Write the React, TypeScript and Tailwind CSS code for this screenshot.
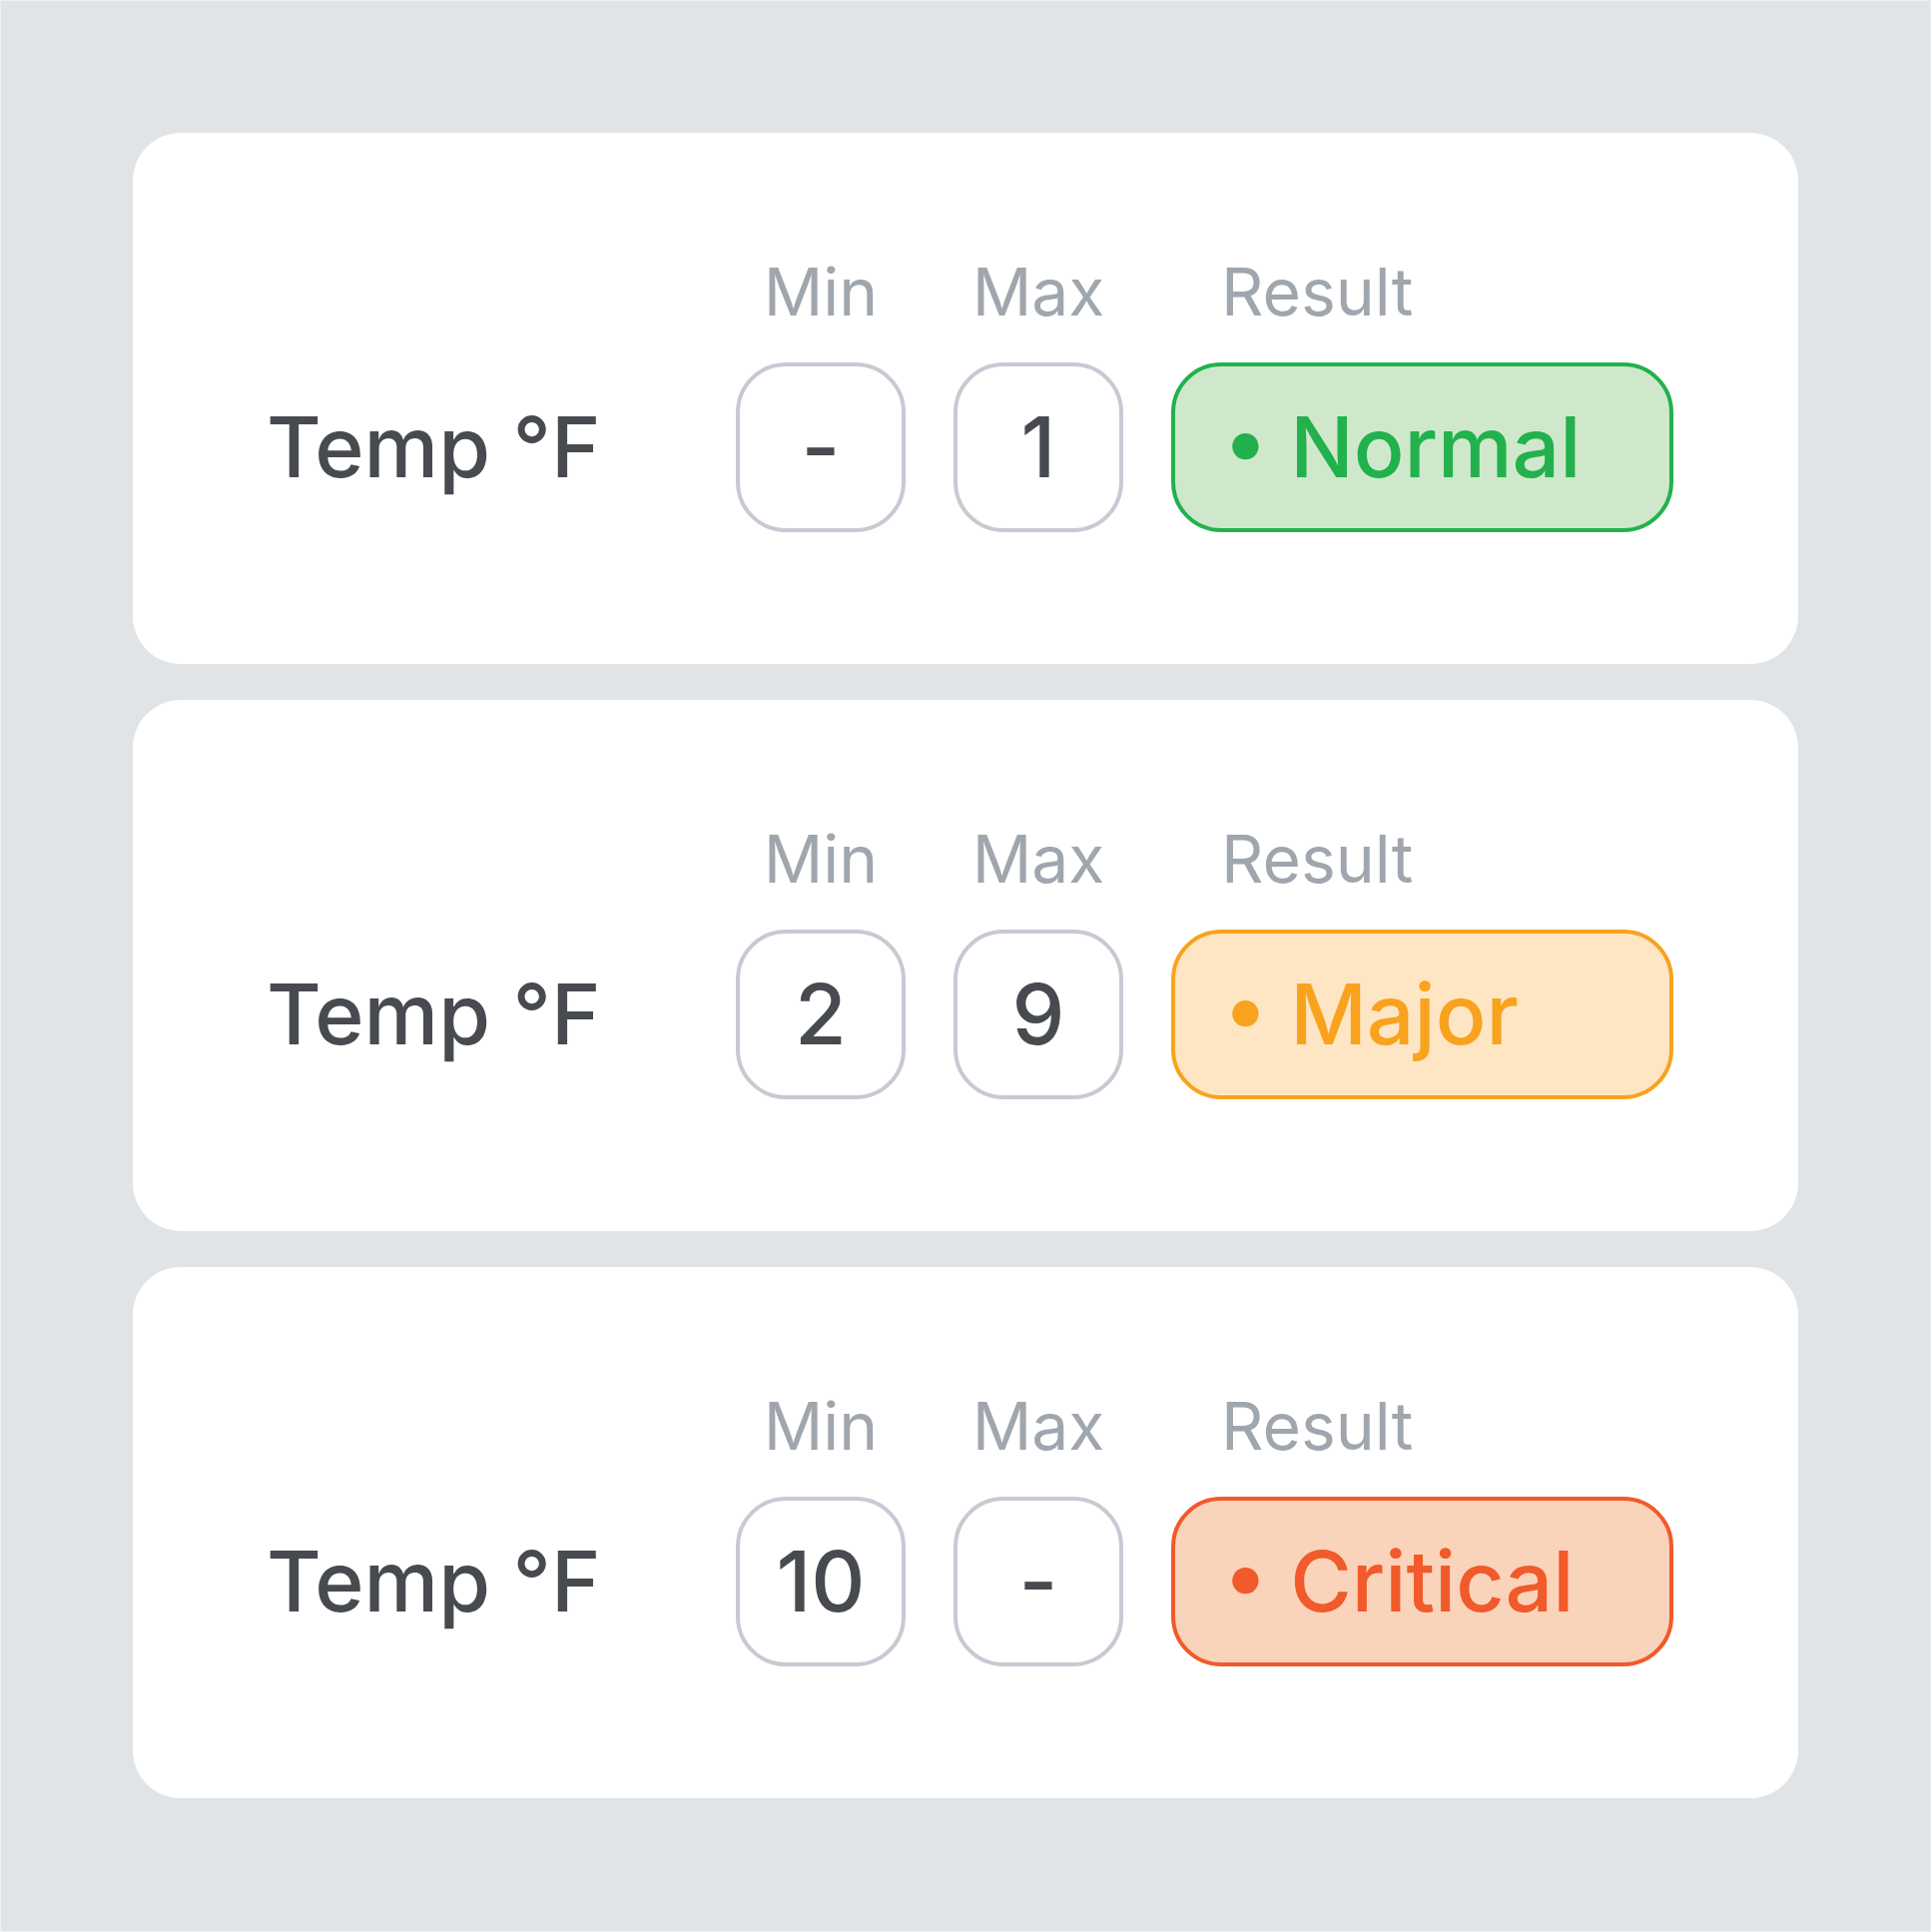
const rows = [
  {
    min: "-",
    max: "1",
    result: "Normal",
    pill: "border-[#22b14c] bg-[#cfe8cc] text-[#22b14c]",
  },
  {
    min: "2",
    max: "9",
    result: "Major",
    pill: "border-[#f9a21e] bg-[#fee6c4] text-[#f9a21e]",
  },
  {
    min: "10",
    max: "-",
    result: "Critical",
    pill: "border-[#f15a2a] bg-[#fad3bb] text-[#f15a2a]",
  },
];

function ValueBox({ value }: { value: string }) {
  return (
    <div className="flex h-[170px] w-[170px] items-center justify-center rounded-[50px] border-[4px] border-[#c6cad2] bg-white text-[84px] font-medium text-[#474b50]">
      {value}
    </div>
  );
}

export default function App() {
  return (
    <div
      className="flex min-h-screen w-full flex-col gap-[36px] border border-[#eef0f2] bg-[#e0e4e7] p-[132px]"
      style={{ fontFamily: "Inter, 'Noto Sans', sans-serif" }}
    >
      {rows.map((row, i) => (
        <div
          key={i}
          className="grid h-[532px] grid-cols-[422px_170px_170px_503px] grid-rows-[80px_170px] gap-x-[48px] gap-y-[31px] rounded-[48px] bg-white pl-[134px] pt-[119px]"
        >
          {/* header row */}
          <div />
          <div className="text-center text-[66px] leading-[80px] text-[#a0a6ad]">Min</div>
          <div className="text-center text-[66px] leading-[80px] text-[#a0a6ad]">Max</div>
          <div className="pl-[50px] text-[66px] leading-[80px] text-[#a0a6ad]">Result</div>

          {/* values row */}
          <div className="flex items-center text-[84px] font-medium text-[#474b50]">Temp °F</div>
          <ValueBox value={row.min} />
          <ValueBox value={row.max} />
          <div
            className={`flex h-[170px] items-center rounded-[50px] border-[4px] pl-[48px] text-[84px] font-medium ${row.pill}`}
          >
            • {row.result}
          </div>
        </div>
      ))}
    </div>
  );
}
